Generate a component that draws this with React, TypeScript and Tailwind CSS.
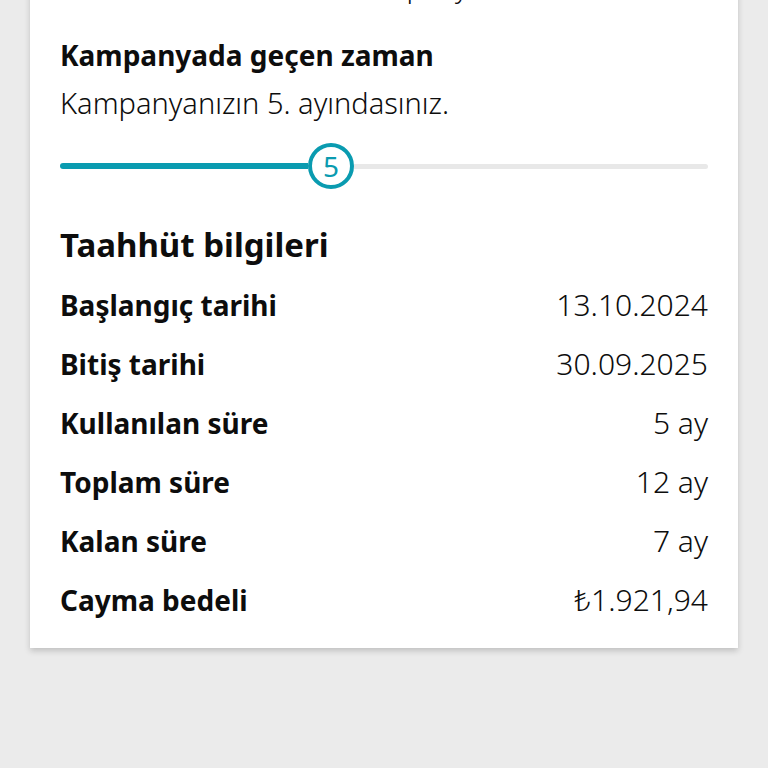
const rows = [
  { label: 'Başlangıç tarihi', value: '13.10.2024' },
  { label: 'Bitiş tarihi', value: '30.09.2025' },
  { label: 'Kullanılan süre', value: '5 ay' },
  { label: 'Toplam süre', value: '12 ay' },
  { label: 'Kalan süre', value: '7 ay' },
  { label: 'Cayma bedeli', value: '₺1.921,94' },
]

export default function App() {
  return (
    <div className="min-h-screen bg-[#ebebeb] px-[30px] overflow-hidden font-['Noto_Sans',sans-serif] text-[#0d0d0d]">
      <div className="bg-white shadow-[0_3px_6px_rgba(0,0,0,0.18)] px-[30px] pb-[19px]">
        {/* line above, mostly scrolled out of view */}
        <p className="-mt-[28px] text-[28px] leading-[28px] font-light pl-[290px] whitespace-nowrap">Kampanya süresi</p>

        <h2 className="mt-[39px] text-[28px] leading-[32px] font-bold">Kampanyada geçen zaman</h2>
        <p className="mt-[16px] text-[29px] leading-[32px] font-light">Kampanyanızın 5. ayındasınız.</p>

        <div className="mt-[24px] h-[46px] flex items-center">
          <div className="h-[6px] w-[248px] bg-[#0a9bb0] rounded-l-full" />
          <div className="w-[46px] h-[46px] rounded-full border-[4px] border-[#0a9bb0] bg-white flex items-center justify-center text-[#0a9bb0] text-[28px] leading-none">
            5
          </div>
          <div className="h-[5px] flex-1 bg-[#e8e8e8] rounded-r-full" />
        </div>

        <h2 className="mt-[36px] text-[33px] leading-[40px] font-bold">Taahhüt bilgileri</h2>

        <div className="mt-[10px]">
          {rows.map(r => (
            <div key={r.label} className="h-[59px] flex items-center justify-between">
              <span className="text-[28px] font-bold">{r.label}</span>
              <span className="text-[30px] font-light">{r.value}</span>
            </div>
          ))}
        </div>
      </div>
    </div>
  )
}
